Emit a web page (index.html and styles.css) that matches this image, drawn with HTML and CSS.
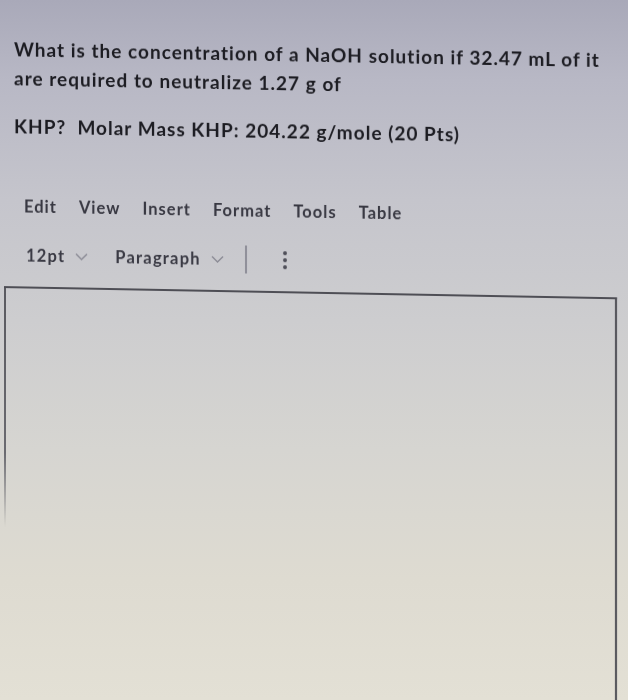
FILE: index.html
```html
<!DOCTYPE html>
<html>
<head>
<meta charset="utf-8">
<link rel="stylesheet" href="styles.css">
</head>
<body>
<div class="page">
  <div class="question">
    <p class="q-line">What is the concentration of a NaOH solution if 32.47 mL of it<br>are required to neutralize 1.27 g of</p>
    <p class="q-line q-second">KHP?&nbsp; Molar Mass KHP: 204.22 g/mole (20 Pts)</p>
  </div>
  <nav class="menubar">
    <span>Edit</span><span>View</span><span>Insert</span><span>Format</span><span>Tools</span><span>Table</span>
  </nav>
  <div class="toolbar">
    <span class="tool">12pt<svg class="chev" viewBox="0 0 13 9"><path d="M1 1.5 L6.5 7 L12 1.5" fill="none" stroke="#8c8c96" stroke-width="1.5"/></svg></span>
    <span class="tool tool-para">Paragraph<svg class="chev" viewBox="0 0 13 9"><path d="M1 1.5 L6.5 7 L12 1.5" fill="none" stroke="#8c8c96" stroke-width="1.5"/></svg></span>
    <span class="sep"></span>
    <span class="kebab"><i></i><i></i><i></i></span>
  </div>
  <div class="editor"></div>
</div>
</body>
</html>
```
FILE: styles.css
```css
html, body {
  margin: 0;
  padding: 0;
  height: 700px;
  overflow: hidden;
}
body {
  background: linear-gradient(180deg, #a9a9b9 0px, #b8b8c5 80px, #c5c5cc 200px, #cdcdcf 320px, #d6d5d1 450px, #dedbd1 580px, #e3e0d5 700px);
  font-family: Lato, "Open Sans", sans-serif;
}
.page {
  transform: skewY(1.05deg);
  transform-origin: 0 0;
  filter: blur(0.45px);
  padding: 34px 0 0 14px;
  height: 700px;
  box-sizing: border-box;
  display: flex;
  flex-direction: column;
}
.question {
  color: #1c1c22;
  font-weight: 700;
  font-size: 19px;
  letter-spacing: 1px;
}
.q-line {
  margin: 0;
  line-height: 29px;
}
.q-second {
  margin-top: 19px;
}
.menubar {
  display: flex;
  gap: 22px;
  margin: 57px 0 0 10px;
  font-size: 16.5px;
  line-height: 18px;
  letter-spacing: 1px;
  font-weight: 700;
  color: #383842;
}
.toolbar {
  display: flex;
  align-items: center;
  margin: 26px 0 0 12px;
  font-size: 16.5px;
  letter-spacing: 1.2px;
  font-weight: 700;
  color: #3a3a44;
  height: 28px;
}
.tool {
  display: flex;
  align-items: center;
  gap: 10px;
}
.tool-para {
  margin-left: 27px;
}
.chev {
  width: 13px;
  height: 9px;
}
.sep {
  width: 2px;
  height: 28px;
  background: #8e8e98;
  margin-left: 21px;
}
.kebab {
  display: flex;
  flex-direction: column;
  gap: 3px;
  margin-left: 36px;
}
.kebab i {
  width: 4px;
  height: 4px;
  border-radius: 50%;
  background: #4e4e58;
}
.editor {
  margin: 17px 0 0 -10px;
  width: 613px;
  flex: 1;
  box-sizing: border-box;
  border-top: 2px solid #4e4e55;
  border-right: 2px solid #4e4e55;
  background: linear-gradient(180deg, #5a5a60 0%, #6a6a70 40%, rgba(120,120,125,0) 58%) no-repeat left top / 2px 100%;
}
```
